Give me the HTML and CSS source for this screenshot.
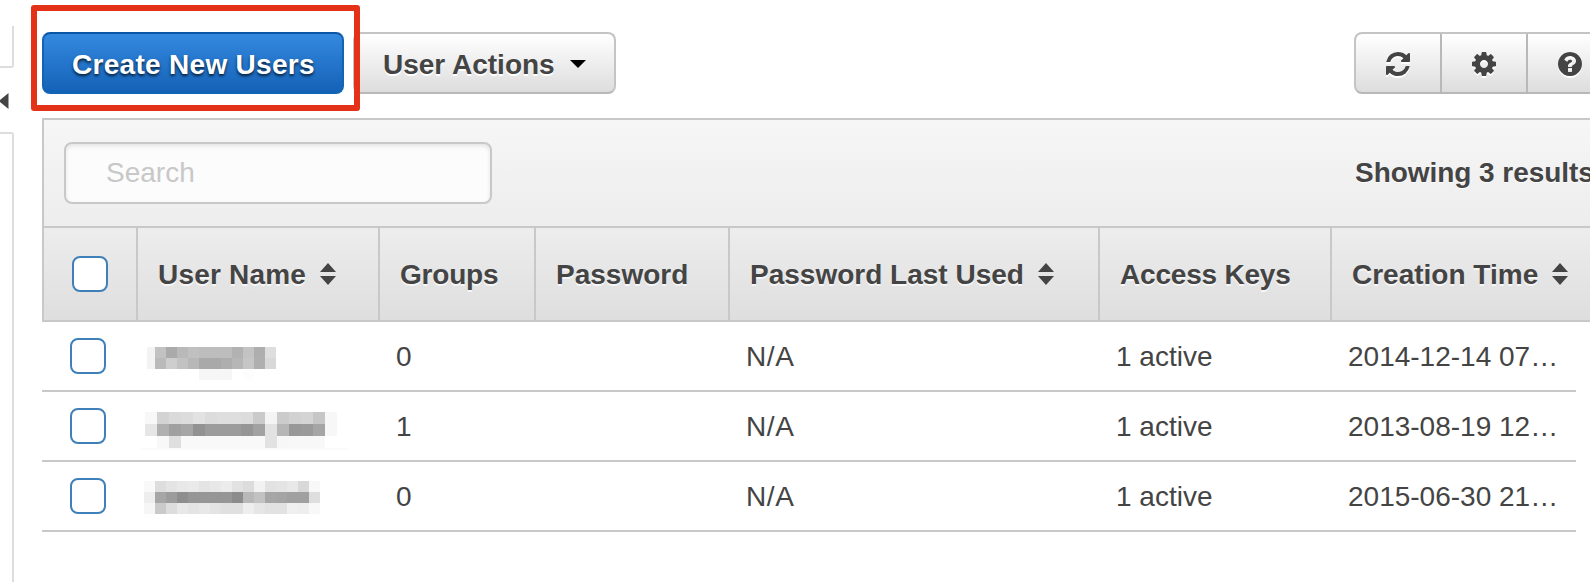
FILE: index.html
```html
<!DOCTYPE html>
<html lang="en">
<head>
<meta charset="utf-8">
<title>Users</title>
<link rel="stylesheet" href="styles.css">
</head>
<body>
<div class="app">
  <aside class="rail">
    <div class="rail-top"></div>
    <svg class="rail-arrow" width="9" height="16" viewBox="0 0 9 16"><path d="M8.500 0V16L0 9V7z" fill="#444"/></svg>
    <div class="rail-body"></div>
  </aside>
  <main class="main">
    <div class="actions">
      <div class="primary-wrap">
        <button class="btn btn-primary">Create New Users</button>
        <span class="highlight"></span>
      </div>
      <button class="btn btn-menu">User Actions<svg width="16" height="8" viewBox="0 0 16 8"><path d="M0 0H16L8 8z"/></svg></button>
      <div class="btn-group">
        <button class="tool"><svg width="28" height="28" viewBox="0 0 1792 1792"><path d="M1639 1056q0 5-1 7-64 268-268 434.500t-478 166.500q-146 0-282.500-55t-243.500-157l-129 129q-19 19-45 19t-45-19-19-45v-448q0-26 19-45t45-19h448q26 0 45 19t19 45-19 45l-137 137q71 66 161 102t187 36q134 0 250-65t186-179q11-17 53-117 8-23 30-23h192q13 0 22.500 9.500t9.500 22.500zm25-800v448q0 26-19 45t-45 19h-448q-26 0-45-19t-19-45 19-45l138-138q-148-137-349-137-134 0-250 65t-186 179q-11 17-53 117-8 23-30 23h-199q-13 0-22.500-9.500t-9.500-22.500v-7q65-268 270-434.500t480-166.500q146 0 284 55.500t245 156.500l130-129q19-19 45-19t45 19 19 45z"/></svg></button>
        <button class="tool"><svg width="28" height="28" viewBox="0 0 1792 1792"><path d="M1152 896q0-106-75-181t-181-75-181 75-75 181 75 181 181 75 181-75 75-181zm512-109v222q0 12-8 23t-20 13l-185 28q-19 54-39 91 35 50 107 138 10 12 10 25t-9 23q-27 37-99 108t-94 71q-12 0-26-9l-138-108q-44 23-91 38-16 136-29 186-7 28-36 28h-222q-14 0-24.500-8.500t-11.500-21.500l-28-184q-49-16-90-37l-141 107q-10 9-25 9-14 0-25-11-126-114-165-168-7-10-7-23 0-12 8-23 15-21 51-66.500t54-70.500q-27-50-41-99l-183-27q-13-2-21-12.500t-8-23.500v-222q0-12 8-23t19-13l186-28q14-46 39-92-40-57-107-138-10-12-10-24 0-10 9-23 26-36 98.500-107.500t94.500-71.500q13 0 26 10l138 107q44-23 91-38 16-136 29-186 7-28 36-28h222q14 0 24.500 8.500t11.500 21.500l28 184q49 16 90 37l142-107q9-9 24-9 13 0 25 10 129 119 165 170 7 8 7 22 0 12-8 23-15 21-51 66.500t-54 70.500q26 50 41 98l183 28q13 2 21 12.500t8 23.500z"/></svg></button>
        <button class="tool"><svg width="28" height="28" viewBox="0 0 1792 1792"><path d="M1024 1376v-192q0-14-9-23t-23-9h-192q-14 0-23 9t-9 23v192q0 14 9 23t23 9h192q14 0 23-9t9-23zm256-672q0-88-55.500-163t-138.500-116-170-41q-243 0-371 213-15 24 8 42l132 100q7 6 19 6 16 0 25-12 53-68 86-92 34-24 86-24 48 0 85.500 26t37.500 59q0 38-20 61t-68 45q-63 28-115.500 86.500t-52.500 125.500v36q0 14 9 23t23 9h192q14 0 23-9t9-23q0-19 21.500-49.500t54.500-49.500q32-18 49-28.500t46-35 44.500-48 28-60.500 12.500-81zm384 192q0 209-103 385.500t-279.500 279.500-385.500 103-385.500-103-279.500-279.500-103-385.500 103-385.500 279.500-279.500 385.500-103 385.500 103 279.500 279.500 103 385.500z"/></svg></button>
      </div>
    </div>

    <section class="grid">
      <div class="filter">
        <input class="search" type="text" placeholder="Search">
        <span class="count">Showing 3 results</span>
      </div>
      <div class="head cols">
        <div class="th"><span class="check"></span></div>
        <div class="th"><span class="label label-user">User Name</span><svg class="sort" width="16" height="22" viewBox="0 0 16 22"><path d="M8 0L16 9H0zM0 13H16L8 22z"/></svg></div>
        <div class="th"><span class="label label-tight">Groups</span></div>
        <div class="th"><span class="label">Password</span></div>
        <div class="th"><span class="label">Password Last Used</span><svg class="sort" width="16" height="22" viewBox="0 0 16 22"><path d="M8 0L16 9H0zM0 13H16L8 22z"/></svg></div>
        <div class="th"><span class="label label-tight">Access Keys</span></div>
        <div class="th"><span class="label">Creation Time</span><svg class="sort" width="16" height="22" viewBox="0 0 16 22"><path d="M8 0L16 9H0zM0 13H16L8 22z"/></svg></div>
      </div>
    </section>
    <div class="rows">
      <div class="row cols">
        <div class="td"><span class="check"></span></div>
        <div class="td name"><svg class="mask" data-mask="0" width="212" height="68"></svg></div>
        <div class="td text">0</div><div class="td"></div><div class="td text wide">N/A</div><div class="td text">1 active</div><div class="td text">2014-12-14 07…</div>
      </div>
      <div class="row cols">
        <div class="td"><span class="check"></span></div>
        <div class="td name"><svg class="mask" data-mask="1" width="212" height="68"></svg></div>
        <div class="td text">1</div><div class="td"></div><div class="td text wide">N/A</div><div class="td text">1 active</div><div class="td text">2013-08-19 12…</div>
      </div>
      <div class="row cols">
        <div class="td"><span class="check"></span></div>
        <div class="td name"><svg class="mask" data-mask="2" width="212" height="68"></svg></div>
        <div class="td text">0</div><div class="td"></div><div class="td text wide">N/A</div><div class="td text">1 active</div><div class="td text">2015-06-30 21…</div>
      </div>
    </div>
  </main>
</div>
<script src="masks.js"></script>
</body>
</html>
```
FILE: styles.css
```css
* { box-sizing: border-box; }
body {
  margin: 0;
  width: 1590px;
  height: 582px;
  overflow: hidden;
  background: #fff;
  color: #444;
  font: 28px/34px "Liberation Sans", Arial, sans-serif;
}
.app { display: flex; height: 582px; }

.rail {
  width: 14px;
  flex: none;
  display: flex;
  flex-direction: column;
  padding-top: 26px;
}
.rail-top {
  height: 42px;
  border-right: 2px solid #ddd;
  border-bottom: 2px solid #ddd;
  border-bottom-right-radius: 3px;
}
.rail-arrow { margin: 25px 0 23px; display: block; }
.rail-body {
  flex: 1;
  border-top: 2px solid #ddd;
  border-right: 2px solid #ddd;
  border-top-right-radius: 3px;
}

.main { flex: 1; min-width: 0; padding: 32px 0 0 28px; overflow: hidden; }
.actions { display: flex; height: 62px; margin-bottom: 24px; }
button { font: inherit; color: inherit; margin: 0; }
.btn {
  height: 62px;
  border-radius: 8px;
  font-weight: bold;
  text-align: left;
  white-space: nowrap;
}
.primary-wrap { position: relative; flex: none; }
.btn-primary {
  display: block;
  width: 302px;
  padding: 4px 0 0 28px;
  border: 2px solid #1464b4;
  border-top-color: #0a55a5;
  background: linear-gradient(#3489df, #1462b8);
  color: #fff;
  letter-spacing: .3px;
  text-shadow: 0 2px 3px rgba(0, 0, 0, .75);
}
.highlight {
  position: absolute;
  left: -11px;
  top: -27px;
  width: 329px;
  height: 106px;
  border: 6px solid #e33217;
  border-radius: 3px;
  z-index: 2;
}
.btn-menu {
  flex: none;
  width: 263px;
  margin-left: 9px;
  display: flex;
  align-items: center;
  padding: 3px 0 0 28px;
  border: 2px solid #c4c4c4;
  border-bottom-color: #b8b8b8;
  background: linear-gradient(#fff, #ddd);
  text-shadow: 0 2px 0 #fff;
}
.btn-menu svg { margin: 0 0 2px 15px; fill: #000; }

.btn-group {
  flex: none;
  display: flex;
  margin-left: 738px;
  border: 2px solid #c4c4c4;
  border-bottom-color: #b8b8b8;
  border-radius: 8px;
  background: linear-gradient(#fff, #ddd);
}
.tool {
  width: 86px;
  padding: 1px 0 0;
  border: 0;
  border-right: 2px solid #b8b8b8;
  background: none;
  display: flex;
  align-items: center;
  justify-content: center;
}
.tool svg { fill: #444; filter: drop-shadow(0 2px 0 #fff); }

.grid { border: solid #c8c8c8; border-width: 2px 0 2px 2px; }
.filter {
  display: flex;
  align-items: center;
  height: 106px;
  padding-left: 20px;
  background: linear-gradient(#f6f6f6, #ededed);
}
.search {
  width: 428px;
  height: 62px;
  border: 2px solid #c8c8c8;
  border-radius: 8px;
  padding: 0 38px 0 40px;
  background: #fcfcfc;
  box-shadow: inset 0 2px 4px rgba(0, 0, 0, .1);
  font: inherit;
}
.search::placeholder { color: #c8c8c8; opacity: 1; }
.count {
  margin-left: 863px;
  font-weight: bold;
  letter-spacing: -.05px;
  white-space: nowrap;
  text-shadow: 0 1px 0 #fff;
}
.cols {
  display: grid;
  grid-template-columns: 94px 242px 156px 194px 370px 232px 260px;
}
.head {
  height: 94px;
  border-top: 2px solid #c8c8c8;
  background: linear-gradient(#ededed, #dedede);
  font-weight: bold;
  text-shadow: 0 2px 0 #f6f6f6;
}
.th {
  display: flex;
  align-items: center;
  padding-left: 20px;
  border-right: 2px solid #c8c8c8;
  white-space: nowrap;
}
.th:first-child { padding-left: 28px; }
.label { padding-top: 1px; }
.label-user { letter-spacing: .2px; }
.label-tight { letter-spacing: -.2px; }
.sort { margin: 0 0 1px 14px; fill: #444; }
.check {
  width: 36px;
  height: 36px;
  border: 2px solid #4080b8;
  border-radius: 8px;
  background: #fff;
}
.rows { width: 1534px; }
.row { height: 70px; border-bottom: 2px solid #c8c8c8; overflow: hidden; }
.td { display: flex; align-items: center; padding-left: 18px; white-space: nowrap; }
.td:first-child { padding-left: 28px; }
.text { padding-top: 1px; }
.wide { letter-spacing: .6px; }
.td.name { padding-left: 0; }
.mask { display: block; }
```
FILE: masks.js
```javascript
// Pixelated user names: x offsets are relative to the name cell.
const masks = [
  { y: 25, h: 11, edges: [11, 19, 30, 41, 52, 63, 74, 85, 96, 107, 118, 129, 140], rows: [
    "f3 c2 aa b9 c0 bd bd bd b2 c3 ae de",
    "f3 ba ce c2 b8 a9 a9 ae b6 c6 af d8",
    "ff ff ff ff ff f6 f6 f6 ff fd ff ff"] },
  { y: 20, h: 12, edges: [9, 21, 33, 45, 57, 69, 81, 93, 105, 117, 129, 141, 153, 165, 177, 189, 201], rows: [
    "f8 d3 da dc e2 dc de de dc ca f4 cb d2 d4 c6 f7",
    "e6 b0 a0 a6 92 9c 9c 9c 96 a2 e2 b6 98 9a a5 f7",
    "ff f8 df f9 f9 f9 f9 f9 f9 f9 e2 f7 f8 f8 f8 ff"] },
  { y: 19, h: 11, edges: [8, 19, 30, 41, 52, 63, 74, 85, 96, 107, 118, 129, 140, 151, 162, 173, 184], rows: [
    "f9 dd e4 e8 ea e4 e8 ec e2 dc f2 e2 e4 e8 d8 f8",
    "ee a6 9c 8e 96 96 96 96 8c b8 c2 a6 a4 a0 a0 de",
    "f6 ca dd e8 e4 e8 e4 e0 e0 ee e6 e2 e2 f0 ee f8"] }
];
document.querySelectorAll(".mask").forEach(svg => {
  const m = masks[svg.dataset.mask];
  let out = "";
  m.rows.forEach((line, r) => line.split(" ").forEach((v, i) => {
    out += `<rect x="${m.edges[i]}" y="${m.y + r * m.h}" width="${m.edges[i + 1] - m.edges[i]}" height="${m.h}" fill="#${v}${v}${v}"/>`;
  }));
  if (svg.dataset.mask === "1") out += '<rect x="5" y="56" width="209" height="2" fill="#fafafa"/>';
  svg.innerHTML = out;
});
```
